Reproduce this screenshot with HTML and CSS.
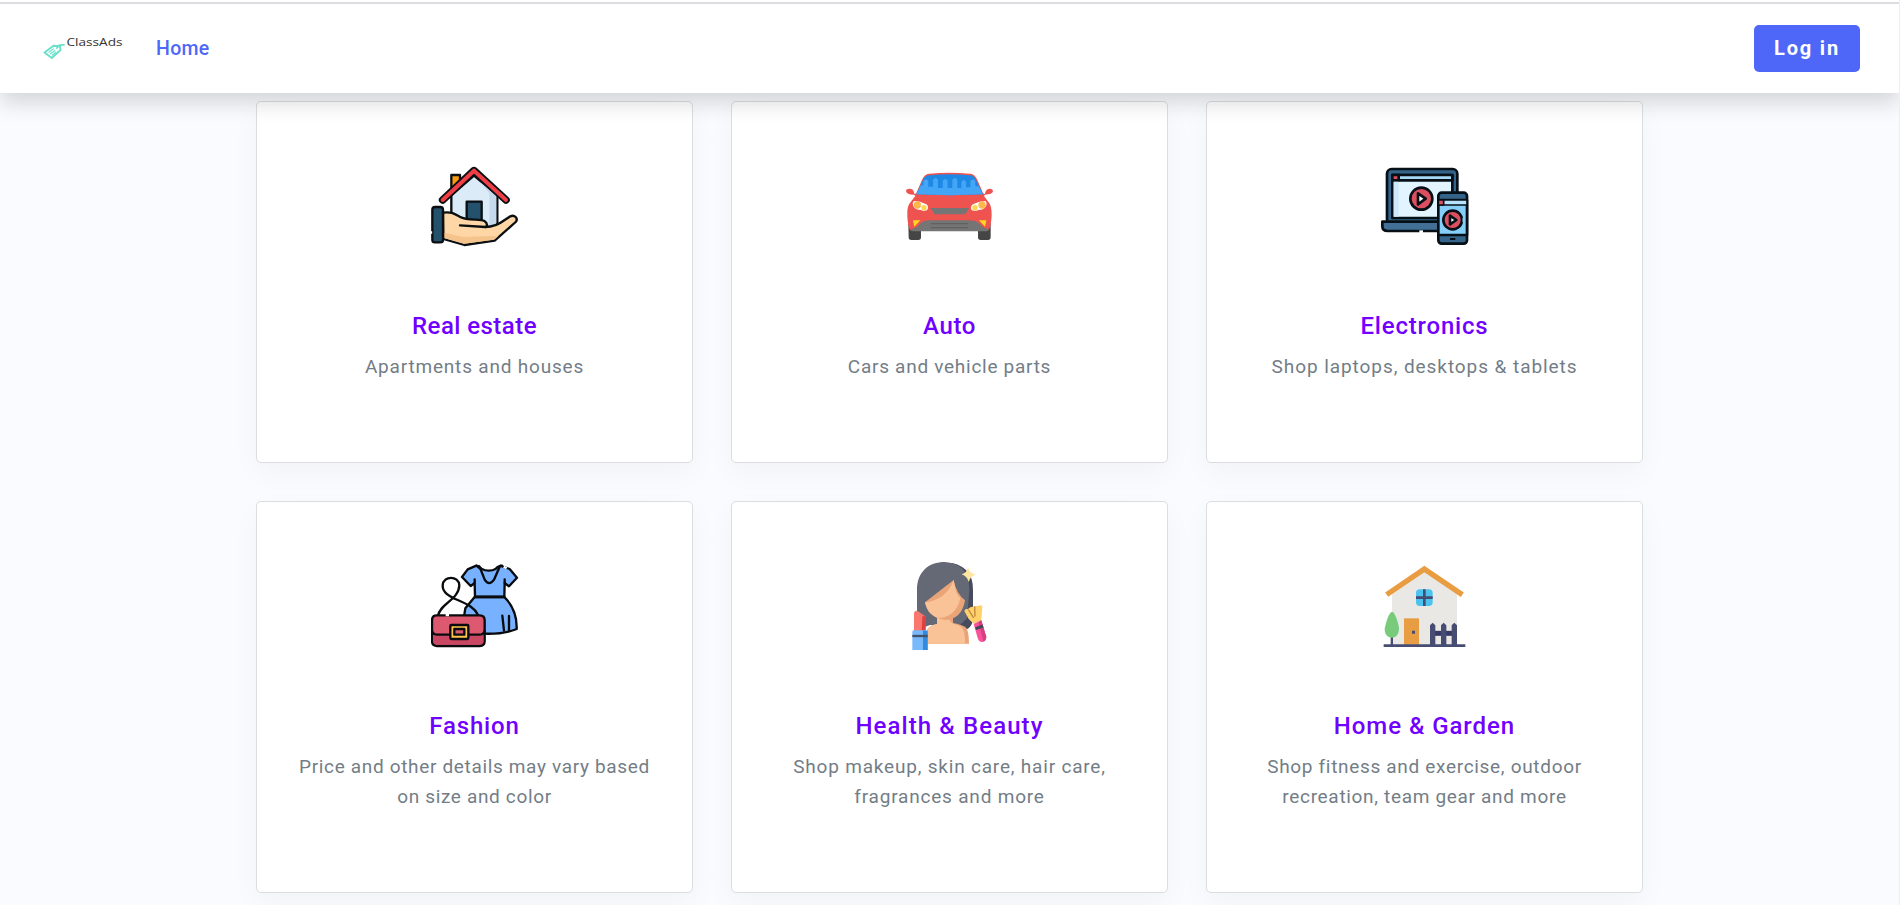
FILE: index.html
```html
<!DOCTYPE html>
<html lang="en">
<head>
<meta charset="utf-8">
<title>ClassAds</title>
<link rel="stylesheet" href="styles.css">
</head>
<body>
<header class="navbar">
  <a class="brand" href="#" aria-label="ClassAds">
    <svg width="82" height="30" viewBox="0 0 82 30">
      <g fill="none" stroke="#6adfc9" stroke-width="1.9" stroke-linejoin="round" stroke-linecap="round">
        <path d="M2.5 18.5 11.5 11.8 18 12.2 18.5 16 9.8 24Z"/>
        <path d="M14.8 14 17.5 11.2 22 10.8" stroke-width="1.8"/>
        <path d="M7 18.3 11.4 14.9M8.6 19.8 12.8 16.5M10.3 21.1 13.8 18.3" stroke-width="1.2"/>
      </g>
      <text class="brand-text" x="24.5" y="12" textLength="56" lengthAdjust="spacingAndGlyphs">ClassAds</text>
    </svg>
  </a>
  <a class="nav-link" href="#">Home</a>
  <a class="login" href="#">Log in</a>
</header>
<main class="grid">
  <a class="card" href="#">
    <svg class="icon" viewBox="33 21 264 264">
      <g stroke="#0b0f12" stroke-width="7" stroke-linejoin="round" stroke-linecap="round">
        <path fill="#f99b0c" d="M94 101V60H120V82"/>
        <path fill="#dcebf8" d="M94 120 162 62 232 120V218H94Z"/>
        <path fill="#c6d9ec" stroke="none" d="M180 80 229 122V205L208 215V115Z"/>
        <path fill="#24516b" d="M140 200V140H185V200"/>
        <path fill="none" stroke-width="23" d="M68 135 162 47 258 135"/>
        <path fill="none" stroke="#f03e46" stroke-width="12" d="M68 135 162 47 258 135"/>
        <path fill="#ffd7a6" d="M69 173C92 169 103 176 119 185 145 199 181 190 193 198 203 204 203 215 196 216 222 216 237 208 254 195L271 184C283 178 296 190 287 201L224 257 133 270 70 252Z"/>
        <path fill="#f5c48d" stroke="none" d="M73 233 130 246 213 243 235 244 222 254 133 266 73 249Z"/>
        <path fill="none" d="M120 211 196 216"/>
        <rect x="37" y="156" width="32" height="106" rx="8" fill="#24516b"/>
      </g>
      <path stroke="#fff" stroke-width="5" d="M34 229V236"/>
    </svg>
    <h2 class="title t1">Real estate</h2>
    <p class="text p1">Apartments and houses</p>
  </a>
  <a class="card" href="#">
    <svg class="icon" viewBox="33 21 264 264">
      <path fill="#454545" d="M40 205H78V247Q78 255 70 255H49Q41 255 41 247ZM249 205H287V247Q287 255 279 255H257Q249 255 249 247Z"/>
      <path fill="#ef5350" d="M33 108Q34 100 46 101 56 102 57 113L59 118 64 114 82 73Q88 58 102 56 162 50 226 56 240 58 246 73L264 114 269 118 271 112Q274 101 285 101 294 102 294 109 292 119 270 119L267 123 283 145Q290 155 290 180 289 205 284 220Q282 228 274 228H54Q45 228 43 220 36 200 37 170 38 150 47 141L61 123 57 119Q34 119 33 108Z"/>
      <path fill="#1e88e5" d="M64 118 85 73Q90 62 103 61 162 55 225 61 237 62 242 73L264 118Q164 123 64 118Z"/>
      <path fill="#42a5f5" d="M64 118 78 91H85V78Q93 68 100 78V95H114V74Q122 64 129 74V99H143V77Q151 67 158 77V99H172V74Q180 64 187 74V99H199V80Q206 70 213 80V97H226V78Q234 68 241 78V94H251L264 118Q164 123 64 118Z"/>
      <path fill="#757575" d="M106 159H222L211 178H119ZM47 221Q65 220 72 209 83 197 102 196H224Q247 197 257 210 267 221 281 221 280 229 271 229H57Q48 229 47 221Z"/>
      <path stroke="#616161" stroke-width="4" d="M107 206H220M107 218H220"/>
      <path fill="#fff" d="M57 138Q76 138 92 147 102 151 98 163 92 171 77 165 53 164 53 144ZM271 138Q252 138 236 147 226 151 228 163 235 171 251 165 275 164 275 144Z"/>
      <g fill="#ffb74d"><circle cx="67" cy="150" r="11"/><circle cx="261" cy="150" r="11"/></g>
      <g fill="#ffd54f"><circle cx="87" cy="158" r="8"/><circle cx="240" cy="158" r="8"/></g>
      <path fill="#fdd920" d="M54 196H76L58 215Z M252 196H274L270 215Z"/>
    </svg>
    <h2 class="title t2">Auto</h2>
    <p class="text p2">Cars and vehicle parts</p>
  </a>
  <a class="card" href="#">
    <svg class="icon" viewBox="33 21 264 264">
      <g stroke="#071017" stroke-width="8" stroke-linejoin="round">
        <rect x="51" y="42" width="211" height="165" rx="14" fill="#35648a"/>
        <rect x="67" y="60" width="180" height="129" fill="#e2f4ff"/>
        <path fill="#a5d9f5" d="M67 60H247V76H67Z"/>
        <path fill="#df4d60" d="M67 60H86V76H67Z"/>
        <path fill="#426f96" d="M37 200H215V228H53Q37 228 37 214Z"/>
        <circle cx="154" cy="131" r="33" fill="#dc4f60"/>
        <path fill="#fff" d="M144 115 167 131 144 148Z"/>
        <rect x="205" y="113" width="86" height="153" rx="10" fill="#35648a"/>
        <path fill="#85cff8" d="M205 135H291V240H205Z"/>
        <path fill="#b5e3fb" stroke-width="5" d="M205 135H291V150H205Z"/>
        <path fill="#df4d60" stroke-width="5" d="M205 135H221V150H205Z"/>
        <circle cx="248" cy="195" r="28" fill="#dc4f60"/>
        <path fill="#fff" d="M240 182 259 195 240 208Z"/>
      </g>
      <path fill="#cceafb" d="M71 80H86V185H71Z"/>
      <path stroke="#071017" stroke-width="6" d="M240 252H256"/>
      <path stroke="#fff" stroke-width="8" d="M148 230H159"/>
      <path stroke="#85cff8" stroke-width="7" d="M281 188V202"/>
    </svg>
    <h2 class="title t3">Electronics</h2>
    <p class="text p3">Shop laptops, desktops &amp; tablets</p>
  </a>
  <a class="card" href="#">
    <svg class="icon" viewBox="33 21 264 264">
      <g stroke="#090b0e" stroke-width="7" stroke-linejoin="round" stroke-linecap="round">
        <path fill="#78b1ff" d="M164 126 136 160 128 210 192 236Q250 238 290 222 292 165 253 126Z"/>
        <path fill="#78b1ff" d="M169 32 143 43 126 66 152 93 164 84 165 125H253L254 84 267 94 291 68 269 42 240 32 228 43 207 47 183 43Z"/>
        <path fill="#78b1ff" d="M178 33 194 74Q207 95 222 74L240 33"/>
        <path fill="#fff" stroke="none" d="M176 25 181 36Q207 60 236 36L241 25Z"/>
        <path fill="none" d="M170 32Q180 34 184 41 207 53 228 41 232 34 246 32"/>
        <path fill="none" d="M164 83V73M254 83V73M165 126H253M247 182 252 227M267 183V227"/>
        <path fill="none" d="M54 183C60 145 117 134 118 91 116 61 70 61 68 91 67 114 92 125 106 132 147 149 164 159 174 180"/>
        <path fill="#dd596f" d="M50 181H179Q194 181 194 196V258Q194 273 179 273H51Q36 273 36 258V196Q36 181 50 181Z"/>
        <path fill="#c94763" stroke="none" d="M40 242H190V260Q188 268 179 269H51Q41 268 40 260Z"/>
        <path fill="none" d="M36 228Q39 239 52 239H90M147 239H178Q191 239 194 228"/>
        <rect x="91" y="210" width="54" height="42" rx="3" fill="#ffc64b"/>
        <rect x="103" y="222" width="30" height="17" fill="#dd596f"/>
      </g>
      <path stroke="#fff" stroke-width="7" d="M77 180H87M251 35 260 40"/>
    </svg>
    <h2 class="title t4">Fashion</h2>
    <p class="text p4">Price and other details may vary based on size and color</p>
  </a>
  <a class="card" href="#">
    <svg class="icon" viewBox="33 21 264 264">
      <path fill="#464b5e" d="M150 21Q235 28 234 105V195Q229 219 213 224L165 190V23Z"/>
      <path fill="#646975" d="M66 225V105C66 51 100 21 150 21 207 25 224 62 223 108L216 190 195 210 105 210Z"/>
      <path fill="#e9a478" d="M126 175H174V204Q198 208 211 216 222 224 222 266H97L96 224Q105 210 126 207Z"/>
      <path fill="#fac397" d="M126 181H158Q162 207 190 211 211 217 210 266H97V223Q107 210 126 207Z"/>
      <path fill="#e9a478" d="M90 142 176 75Q184 116 210 136 201 192 151 195 106 191 90 142Z"/>
      <path fill="#fac397" d="M90 142C128 140 164 113 176 75 180 103 185 120 196 129 188 175 151 192 126 188 105 180 94 164 90 142Z"/>
      <path fill="#ffe6a0" d="M219 37Q224 56 243 59 226 62 221 81 217 64 200 58 216 54 219 37Z"/>
      <path fill="#fa7770" d="M57 173Q61 164 71 170L91 184V228H57Z"/>
      <path fill="#df3f40" d="M82 185Q91 178 92 190V228H80Z"/>
      <path fill="#77b9fa" d="M52 230Q52 226 58 226H93Q98 227 98 232V286H52Z"/>
      <path fill="#318be0" d="M84 227H98V286H84Z"/>
      <path stroke="#45536a" stroke-width="7" d="M52 243H98"/>
      <path fill="#ffd16d" d="M208 168Q211 160 218 163L226 157 234 155 246 153 260 151 262 157 260 181 258 197 236 206 221 192Z"/>
      <path stroke="#bc8739" stroke-width="4" stroke-linecap="round" d="M221 165 235 187M239 155 240 183"/>
      <path fill="#f9529a" d="M236 207 259 196 274 246Q274 259 261 261 252 261 248 249Z"/>
      <path fill="#d6407f" d="M250 201 259 196 274 246Q273 257 266 260Z"/>
      <path stroke="#46485a" stroke-width="9" d="M242 221 264 213"/>
    </svg>
    <h2 class="title t5">Health &amp; Beauty</h2>
    <p class="text p5">Shop makeup, skin care, hair care, fragrances and more</p>
  </a>
  <a class="card" href="#">
    <svg class="icon" viewBox="33 21 264 264">
      <path fill="#e9e8e4" d="M66 105 163 44 261 105V270H66Z"/>
      <path fill="none" stroke="#e99d43" stroke-width="16" d="M50 119 163 42 277 119"/>
      <rect x="138" y="103" width="50" height="50" rx="11" fill="#4bc3ee"/>
      <path stroke="#464c72" stroke-width="8" d="M138 128H188M163 103V153"/>
      <path fill="#e99d43" d="M102 190H147V269H102Z"/>
      <path fill="#464c72" d="M126 227H135V236H126ZM41 268H286V276H41ZM62 240H69V270H62Z"/>
      <path stroke="#343a65" stroke-width="15" d="M185 235H255"/>
      <path fill="#464c72" d="M180 270V211L188 203 196 211V270ZM213 270V211L221 203 229 211V270ZM245 270V211L253 203 261 211V270Z"/>
      <path fill="#78cb7a" d="M66 170C75 171 84 200 87 219 87 238 78 248 66 248 52 248 44 237 44 221 49 196 58 171 66 170Z"/>
    </svg>
    <h2 class="title t6">Home &amp; Garden</h2>
    <p class="text p6">Shop fitness and exercise, outdoor recreation, team gear and more</p>
  </a>
</main>
</body>
</html>
```
FILE: styles.css
```css
* { box-sizing: border-box; }
html { height: 100%; overflow: hidden; }
body {
  margin: 0;
  height: 100%;
  overflow: hidden;
  background: #fafbff;
  border-right: 1px solid #eeeef1;
  font-family: Roboto, "Liberation Sans", sans-serif;
}
a { color: inherit; text-decoration: none; }
.navbar {
  position: relative;
  z-index: 2;
  display: flex;
  align-items: center;
  height: 93px;
  padding: 4px 39px 0 42px;
  background: linear-gradient(#fff 2px, #dcdde1 2px, #dcdde1 4px, #fff 4px);
  box-shadow: 0 10px 20px rgba(0, 0, 0, .15);
}
.brand { display: flex; margin-right: 32px; }
.brand-text { font: 11px "Open Sans", sans-serif; fill: #333; }
.nav-link {
  padding-bottom: 1px;
  color: #4f67f8;
  font-size: 19.5px;
  font-weight: 500;
  letter-spacing: .3px;
}
.login {
  display: flex;
  align-items: center;
  justify-content: center;
  width: 106px;
  height: 47px;
  padding-bottom: 1px;
  margin-left: auto;
  border-radius: 5px;
  background: #4f67f8;
  color: #fff;
  font-size: 20px;
  font-weight: 700;
  letter-spacing: 1.8px;
}
.grid {
  display: grid;
  grid-template-columns: repeat(3, 437px);
  grid-template-rows: 362px 392px;
  gap: 38px;
  justify-content: center;
  padding-top: 8px;
}
.card {
  display: flex;
  flex-direction: column;
  align-items: center;
  padding: 60px 36px 0;
  border: 1px solid #dcdddf;
  border-radius: 5px;
  background: #fff;
  box-shadow: 0 10px 30px rgba(0, 0, 0, .035);
  text-align: center;
}
.icon { width: 88px; height: 88px; flex: none; }
.title {
  margin: 61px 0 0;
  color: #7000ff;
  font-size: 24px;
  font-weight: 500;
  line-height: 30px;
}
.text {
  margin: 11px 0 0;
  color: #737d86;
  font-size: 19px;
  line-height: 30px;
}
/* tracking per label */
.t1 { letter-spacing: .45px; }
.t2 { letter-spacing: .6px; }
.t3 { letter-spacing: .8px; }
.t4 { letter-spacing: .85px; }
.t5 { letter-spacing: 1.1px; }
.t6 { letter-spacing: .95px; }
.p1 { letter-spacing: .81px; }
.p2 { letter-spacing: .72px; }
.p3 { letter-spacing: .93px; }
.p4 { letter-spacing: .66px; }
.p5 { letter-spacing: .8px; }
.p6 { letter-spacing: .68px; }
```
